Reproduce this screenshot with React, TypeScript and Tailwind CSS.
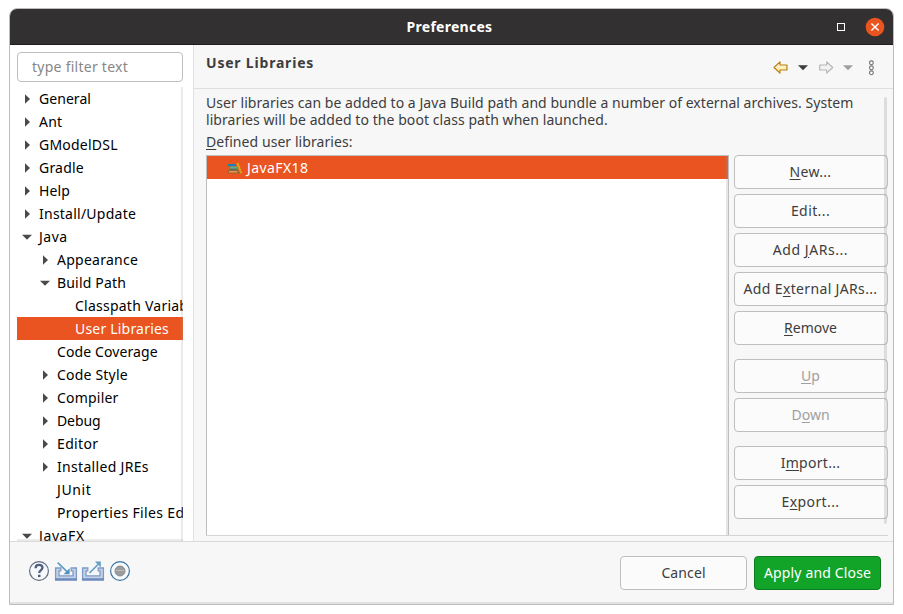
import React from "react";

type Node = { label: string; level: number; state?: "open" | "closed"; selected?: boolean; fit: string };

const nodes: Node[] = [
  { label: "General", level: 0, state: "closed", fit: "tracking-[0.05px]" },
  { label: "Ant", level: 0, state: "closed", fit: "tracking-[0.2px]" },
  { label: "GModelDSL", level: 0, state: "closed", fit: "tracking-[0.22px]" },
  { label: "Gradle", level: 0, state: "closed", fit: "tracking-[0.2px]" },
  { label: "Help", level: 0, state: "closed", fit: "tracking-[0.1px]" },
  { label: "Install/Update", level: 0, state: "closed", fit: "tracking-[0.24px]" },
  { label: "Java", level: 0, state: "open", fit: "tracking-[0.5px]" },
  { label: "Appearance", level: 1, state: "closed", fit: "tracking-[0.25px]" },
  { label: "Build Path", level: 1, state: "open", fit: "tracking-[0.18px]" },
  { label: "Classpath Variables", level: 2, fit: "tracking-[0.24px]" },
  { label: "User Libraries", level: 2, selected: true, fit: "tracking-[0.2px]" },
  { label: "Code Coverage", level: 1, fit: "tracking-[0.1px]" },
  { label: "Code Style", level: 1, state: "closed", fit: "tracking-[0.2px]" },
  { label: "Compiler", level: 1, state: "closed", fit: "tracking-[0.2px]" },
  { label: "Debug", level: 1, state: "closed", fit: "tracking-[-0.1px]" },
  { label: "Editor", level: 1, state: "closed", fit: "tracking-[0.35px]" },
  { label: "Installed JREs", level: 1, state: "closed", fit: "tracking-[0.32px]" },
  { label: "JUnit", level: 1, fit: "tracking-[0.6px]" },
  { label: "Properties Files Editor", level: 1, fit: "tracking-[0.35px]" },
  { label: "JavaFX", level: 0, state: "open", fit: "tracking-[0.6px]" },
];

const indents = ["pl-[4px]", "pl-[22px]", "pl-[40px]"];

function Expander({ state }: { state?: "open" | "closed" }) {
  return (
    <svg className="mr-[6px] h-3 w-3 shrink-0" viewBox="0 0 12 12" fill="#4a4a4a">
      {state === "closed" && <path d="M4 1.2 L9 6 L4 10.8 Z" />}
      {state === "open" && <path d="M1 3.7 H11 L6 8.7 Z" />}
    </svg>
  );
}

function Tree() {
  return (
    <div className="relative mt-[5px] h-[454px] overflow-hidden text-black">
      {nodes.map((n) => (
        <div
          key={n.label}
          className={`flex h-[23px] items-center whitespace-nowrap ${indents[n.level]} ${n.selected ? "bg-[#e95420] text-white" : ""}`}
        >
          <Expander state={n.state} />
          <span className={n.fit}>{n.label}</span>
        </div>
      ))}
      <div className="absolute inset-y-0 right-0 w-0.5 bg-[#999]/20" />
      <div className="absolute inset-x-0 bottom-0 h-0.5 bg-[#999]/20" />
    </div>
  );
}

function Key({ children }: { children: string }) {
  return <span className="underline decoration-1 underline-offset-2">{children}</span>;
}

function SideButton({ children, className = "" }: { children: React.ReactNode; className?: string }) {
  return (
    <button
      className={`flex h-[34px] w-[154px] shrink-0 items-center justify-center whitespace-nowrap rounded-[4px] border border-[#bebebe] bg-[#fbfbfb] pr-px pb-[2px] ${className}`}
    >
      <span>{children}</span>
    </button>
  );
}

function Books() {
  return (
    <svg className="mr-[4px] h-4 w-4" viewBox="0 0 16 16">
      <path d="M1 4h8v2.2H1z" fill="#1b7fb8" />
      <path d="M3 6.4h7v2.4H3z" fill="#5fae86" />
      <path d="M3 8.8h7v1H3z" fill="#1f7f80" />
      <path d="M1 10h9.5v3.4H1z" fill="#a4602c" />
      <path d="M2 11h8v1.4H2z" fill="#d99a5c" />
      <path d="M9.3 3.2l2.2-.7 3.6 10.4-2 .5z" fill="#dca01a" />
      <path d="M11.2 9l1.9 4.4h-2z" fill="#8b6a38" />
    </svg>
  );
}

function NavArrows() {
  return (
    <svg className="mt-[12.5px] mr-[15px] h-[20px] w-[106px]" viewBox="0 0 106 20">
      <defs>
        <linearGradient id="gold" x1="0" y1="0" x2="0" y2="1">
          <stop offset="0" stopColor="#fffdf0" />
          <stop offset="1" stopColor="#ffe490" />
        </linearGradient>
      </defs>
      <path d="M2 9.5 L8 3.8 V7 H15 V12 H8 V15.2 Z" fill="url(#gold)" stroke="#b87e12" strokeWidth="1.15" strokeLinejoin="round" />
      <path d="M26 7.3 H36 L31 12.3 Z" fill="#3d3d3d" />
      <path d="M60.7 9.5 L54.7 3.8 V7 H47.7 V12 H54.7 V15.2 Z" fill="#f2f2f2" stroke="#b5b5b5" strokeWidth="1.15" strokeLinejoin="round" />
      <path d="M71 7.3 H81 L76 12.3 Z" fill="#a0a0a0" />
      <g fill="#fff" stroke="#707070" strokeWidth="1.1">
        <circle cx="99.4" cy="4.8" r="1.9" />
        <circle cx="99.4" cy="9.8" r="1.9" />
        <circle cx="99.4" cy="14.8" r="1.9" />
      </g>
    </svg>
  );
}

function HelpIcon() {
  return (
    <svg className="h-[22px] w-[22px]" viewBox="0 0 22 22" fill="none">
      <circle cx="11" cy="11" r="9.4" fill="#f7f9fc" stroke="#626b80" strokeWidth="1.2" />
      <path d="M7.6 8.2 C7.6 5.7 9 4.9 11 4.9 C13.1 4.9 14.5 6 14.5 7.8 C14.5 10 11.2 10.3 11.2 13.1" stroke="#505f80" strokeWidth="2.3" />
      <path d="M10 14.7h2.5v2.4H10z" fill="#505f80" />
    </svg>
  );
}

function TrayIcon({ out }: { out?: boolean }) {
  return (
    <svg className="h-[22px] w-[24px]" viewBox="0 0 24 22" fill="none">
      <path
        d="M1.6 8 H6.8 V10.8 H5 V15.8 H19 V10.8 H17.2 V8 H22.4 V19.8 H1.6 Z"
        fill="#c3d1e9"
        stroke="#7f9ac6"
        strokeWidth="1.3"
      />
      <path d="M1 19.4H23" stroke="#6f8bbd" strokeWidth="2.4" />
      {out ? (
        <>
          <path d="M8.5 13 L17 4.5" stroke="#5b9cc4" strokeWidth="1.6" />
          <path d="M13.8 1.6H19.8V7.6Z" fill="#64a0c4" />
        </>
      ) : (
        <>
          <path d="M3.7 2.6 L13 11.6" stroke="#5b9cc4" strokeWidth="1.6" />
          <path d="M15.6 8.2V14.2H9.6Z" fill="#4f91bb" />
        </>
      )}
    </svg>
  );
}

function RecordIcon() {
  return (
    <svg className="h-[22px] w-[22px]" viewBox="0 0 22 22">
      <circle cx="11" cy="11" r="9.4" fill="#f5fbff" stroke="#3f739d" strokeWidth="1.2" />
      <circle cx="11" cy="11" r="5" fill="#9c9c9c" stroke="#7c7c7c" strokeWidth="0.8" />
      <path d="M7 10.5h8" stroke="#bdbdbd" />
    </svg>
  );
}

export default function App() {
  return (
    <div className="h-[614px] w-[903px] overflow-hidden bg-white pt-[8px] pl-[9px] font-['Noto_Sans','Open_Sans',sans-serif] text-[14px] leading-[17px] text-[#3d3d3d]">
      <div className="flex h-[597px] w-[885px] flex-col overflow-hidden rounded-t-[8px] border border-[#bdbdbd] bg-[#f7f7f7]">
        <header className="grid h-[36px] shrink-0 grid-cols-[1fr_auto_1fr] items-center border-b border-[#1e1e1e] bg-[#323031] text-white">
          <span />
          <span className="mr-[4px] tracking-[0.27px] font-bold">Preferences</span>
          <div className="flex items-center justify-end pr-[8px]">
            <span className="mr-[20px] h-2 w-2 border border-white" />
            <svg className="h-[20px] w-[20px]" viewBox="0 0 20 20">
              <circle cx="10" cy="10" r="9.3" fill="#e95420" />
              <path d="M6.4 6.4l7.2 7.2M13.6 6.4l-7.2 7.2" stroke="#fff" strokeWidth="1.4" />
            </svg>
          </div>
        </header>

        <div className="flex h-[497px] shrink-0 border-b border-[#dadada]">
          <aside className="w-[184px] shrink-0 border-r border-[#e2e2e2] bg-white pt-[7px] pr-[10px] pl-[7px]">
            <div className="flex h-[30px] items-center rounded-[4px] border border-[#bebebe] pb-[2px] pl-[14px] text-[#878787]">
              <span className="tracking-[0.26px]">type filter text</span>
            </div>
            <Tree />
          </aside>

          <main className="relative flex min-w-0 flex-1 flex-col">
            <div className="flex h-[44px] shrink-0 justify-between border-b border-[#dedede] pl-[12px]">
              <h1 className="mt-[9px] tracking-[0.8px] font-bold">User Libraries</h1>
              <NavArrows />
            </div>
            <div className="flex h-[452px] flex-col pt-[5px] pl-[12px]">
              <div className="flex flex-col whitespace-nowrap">
                <p className="tracking-[0.045px]">User libraries can be added to a Java Build path and bundle a number of external archives. System</p>
                <p className="tracking-[0.068px]">libraries will be added to the boot class path when launched.</p>
              </div>
              <div className="mt-[5px] h-[17px] tracking-[0.07px]">
                <span><Key>D</Key>efined user libraries:</span>
              </div>
              <div className="mt-[5px] flex h-[380px]">
                <div className="relative w-[523px] shrink-0 border border-b-0 border-[#bebebe] bg-white">
                  <div className="flex h-[23px] items-center bg-[#e95420] pl-[20px] text-white">
                    <Books />
                    <span className="tracking-[0.4px]">JavaFX18</span>
                  </div>
                  <div className="absolute inset-y-0 right-0 w-0.5 bg-[#999]/25" />
                </div>
                <div className="ml-[5px] flex flex-col gap-[5px]">
                  <SideButton className="tracking-[0.3px]"><Key>N</Key>ew...</SideButton>
                  <SideButton className="tracking-[0.4px]">Edit...</SideButton>
                  <SideButton className="tracking-[0.55px]">Add <Key>J</Key>ARs...</SideButton>
                  <SideButton className="tracking-[0.35px]">Add E<Key>x</Key>ternal JARs...</SideButton>
                  <SideButton><Key>R</Key>emove</SideButton>
                  <SideButton className="mt-[9px] text-[#a0a0a0]"><Key>U</Key>p</SideButton>
                  <SideButton className="text-[#a0a0a0]">D<Key>o</Key>wn</SideButton>
                  <SideButton className="mt-[9px] tracking-[0.3px]">I<Key>m</Key>port...</SideButton>
                  <SideButton className="tracking-[0.4px]">E<Key>x</Key>port...</SideButton>
                </div>
              </div>
              <div className="mr-[5px] h-px bg-[#d4d4d4]" />
            </div>
            <div className="absolute top-[52px] right-[6px] h-[427px] w-[3px] rounded-full bg-black/10" />
          </main>
        </div>

        <footer className="flex flex-1 items-start justify-between border-b-2 border-[#e2e2e2] pr-[12px] pl-[18px]">
          <div className="mt-[18px] flex">
            <HelpIcon />
            <span className="ml-[4px]"><TrayIcon /></span>
            <span className="ml-[3px]"><TrayIcon out /></span>
            <span className="ml-[4px]"><RecordIcon /></span>
          </div>
          <div className="mt-[14px] flex gap-[7px] whitespace-nowrap">
            <button className="h-[34px] w-[127px] rounded-[4px] border border-[#bebebe] bg-[#fbfbfb] pb-[2px] tracking-[0.1px]">Cancel</button>
            <button className="h-[34px] w-[127px] rounded-[4px] border border-[#0d7b1e] bg-[#12a329] pb-[2px] tracking-[0.15px] text-white">Apply and Close</button>
          </div>
        </footer>
      </div>
    </div>
  );
}
